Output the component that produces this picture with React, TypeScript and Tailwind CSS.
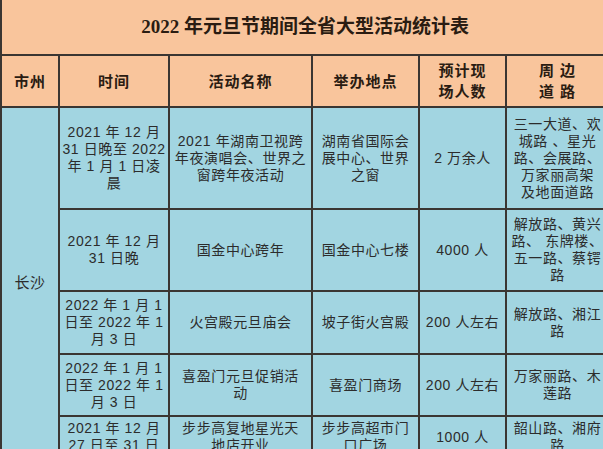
const font = { fontFamily: '"Liberation Sans", "Noto Sans CJK SC", sans-serif' };

type Row = {
  h: string;
  time: string[];
  name: string[];
  place: string[];
  people: string[];
  roads: string[];
};

const rows: Row[] = [
  {
    h: 'h-[102px]',
    time: ['2021 年 12 月', '31 日晚至 2022', '年 1 月 1 日凌', '晨'],
    name: ['2021 年湖南卫视跨', '年夜演唱会、世界之', '窗跨年夜活动'],
    place: ['湖南省国际会', '展中心、世界', '之窗'],
    people: ['2 万余人'],
    roads: ['三一大道、欢', '城路 、星光', '路、会展路、', '万家丽高架', '及地面道路'],
  },
  {
    h: 'h-[82px]',
    time: ['2021 年 12 月', '31 日晚'],
    name: ['国金中心跨年'],
    place: ['国金中心七楼'],
    people: ['4000 人'],
    roads: ['解放路、黄兴', '路、 东牌楼、', '五一路、蔡锷', '路'],
  },
  {
    h: 'h-[63px]',
    time: ['2022 年 1 月 1', '日至 2022 年 1', '月 3 日'],
    name: ['火宫殿元旦庙会'],
    place: ['坡子街火宫殿'],
    people: ['200 人左右'],
    roads: ['解放路、湘江', '路'],
  },
  {
    h: 'h-[62px]',
    time: ['2022 年 1 月 1', '日至 2022 年 1', '月 3 日'],
    name: ['喜盈门元旦促销活', '动'],
    place: ['喜盈门商场'],
    people: ['200 人左右'],
    roads: ['万家丽路、木', '莲路'],
  },
  {
    h: 'h-[42px]',
    time: ['2021 年 12 月', '27 日至 31 日'],
    name: ['步步高复地星光天', '地店开业'],
    place: ['步步高超市门', '口广场'],
    people: ['1000 人'],
    roads: ['韶山路、湘府', '路'],
  },
];

function Lines({ items }: { items: string[] }) {
  return (
    <>
      {items.map((t, i) => (
        <div key={i} className="whitespace-nowrap">{t}</div>
      ))}
    </>
  );
}

const cell = 'border-2 border-[#3a3632] text-center align-middle px-0.5';
const bodyCell = cell + ' text-[14px] leading-[17px] tracking-[0.6px] text-[#2c2c2c]';
const headCell = cell + ' text-[15px] leading-[21px] font-bold tracking-[1px] text-[#2a1c12]';

export default function App() {
  return (
    <div className="w-[603px] h-[449px] overflow-hidden bg-[#a2d5e1]" style={font}>
      <table className="table-fixed border-collapse w-[608px] -mt-[2px]">
        <colgroup>
          <col className="w-[58px]" />
          <col className="w-[110px]" />
          <col className="w-[143px]" />
          <col className="w-[107px]" />
          <col className="w-[87px]" />
          <col className="w-[103px]" />
        </colgroup>
        <tbody>
          <tr className="h-[56px] bg-[#f9c59c]">
            <td colSpan={6} className={cell + ' text-[19px] font-bold text-[#2a1c12]'}>
              <span style={{ fontFamily: '"Liberation Serif", "Noto Sans CJK SC", serif' }}>
                2022 年元旦节期间全省大型活动统计表
              </span>
            </td>
          </tr>
          <tr className="h-[52px] bg-[#f9c59c]">
            <td className={headCell}>市州</td>
            <td className={headCell}>时间</td>
            <td className={headCell}>活动名称</td>
            <td className={headCell}>举办地点</td>
            <td className={headCell}>
              <div>预计现</div>
              <div>场人数</div>
            </td>
            <td className={headCell}>
              <div>周 边</div>
              <div>道 路</div>
            </td>
          </tr>
          {rows.map((r, i) => (
            <tr key={i} className={r.h}>
              {i === 0 && (
                <td rowSpan={5} className={bodyCell + ' text-[15px]'}>
                  长沙
                </td>
              )}
              <td className={bodyCell}>
                <Lines items={r.time} />
              </td>
              <td className={bodyCell}>
                <Lines items={r.name} />
              </td>
              <td className={bodyCell}>
                <Lines items={r.place} />
              </td>
              <td className={bodyCell}>
                <Lines items={r.people} />
              </td>
              <td className={bodyCell}>
                <Lines items={r.roads} />
              </td>
            </tr>
          ))}
        </tbody>
      </table>
    </div>
  );
}
